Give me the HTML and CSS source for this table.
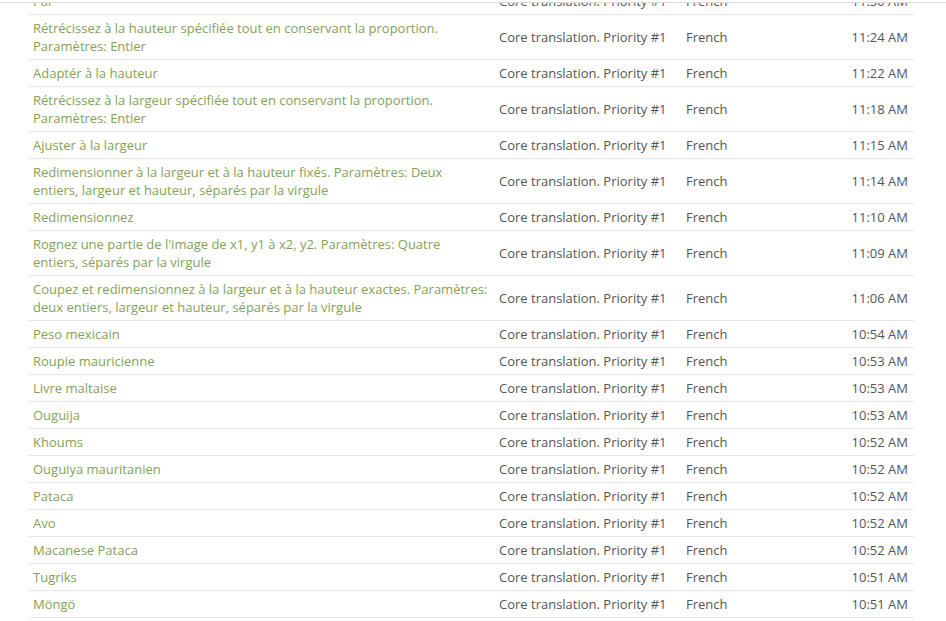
FILE: index.html
```html
<!DOCTYPE html>
<html>
<head>
<meta charset="utf-8">
<link rel="stylesheet" href="styles.css">
</head>
<body>
<div class="topbar"></div>
<table class="log">
<colgroup><col class="c-str"><col class="c-proj"><col class="c-lang"><col class="c-time"></colgroup>
<tbody>
<tr><td class="str">Par</td><td>Core translation. Priority #1</td><td>French</td><td class="time">11:30 AM</td></tr>
<tr><td class="str">Rétrécissez à la hauteur spécifiée tout en conservant la proportion. Paramètres: Entier</td><td>Core translation. Priority #1</td><td>French</td><td class="time">11:24 AM</td></tr>
<tr><td class="str">Adaptér à la hauteur</td><td>Core translation. Priority #1</td><td>French</td><td class="time">11:22 AM</td></tr>
<tr><td class="str">Rétrécissez à la largeur spécifiée tout en conservant la proportion. Paramètres: Entier</td><td>Core translation. Priority #1</td><td>French</td><td class="time">11:18 AM</td></tr>
<tr><td class="str">Ajuster à la largeur</td><td>Core translation. Priority #1</td><td>French</td><td class="time">11:15 AM</td></tr>
<tr><td class="str">Redimensionner à la largeur et à la hauteur fixés. Paramètres: Deux entiers, largeur et hauteur, séparés par la virgule</td><td>Core translation. Priority #1</td><td>French</td><td class="time">11:14 AM</td></tr>
<tr><td class="str">Redimensionnez</td><td>Core translation. Priority #1</td><td>French</td><td class="time">11:10 AM</td></tr>
<tr><td class="str">Rognez une partie de l'image de x1, y1 à x2, y2. Paramètres: Quatre entiers, séparés par la virgule</td><td>Core translation. Priority #1</td><td>French</td><td class="time">11:09 AM</td></tr>
<tr><td class="str">Coupez et redimensionnez à la largeur et à la hauteur exactes. Paramètres: deux entiers, largeur et hauteur, séparés par la virgule</td><td>Core translation. Priority #1</td><td>French</td><td class="time">11:06 AM</td></tr>
<tr><td class="str">Peso mexicain</td><td>Core translation. Priority #1</td><td>French</td><td class="time">10:54 AM</td></tr>
<tr><td class="str">Roupie mauricienne</td><td>Core translation. Priority #1</td><td>French</td><td class="time">10:53 AM</td></tr>
<tr><td class="str">Livre maltaise</td><td>Core translation. Priority #1</td><td>French</td><td class="time">10:53 AM</td></tr>
<tr><td class="str">Ouguija</td><td>Core translation. Priority #1</td><td>French</td><td class="time">10:53 AM</td></tr>
<tr><td class="str">Khoums</td><td>Core translation. Priority #1</td><td>French</td><td class="time">10:52 AM</td></tr>
<tr><td class="str">Ouguiya mauritanien</td><td>Core translation. Priority #1</td><td>French</td><td class="time">10:52 AM</td></tr>
<tr><td class="str">Pataca</td><td>Core translation. Priority #1</td><td>French</td><td class="time">10:52 AM</td></tr>
<tr><td class="str">Avo</td><td>Core translation. Priority #1</td><td>French</td><td class="time">10:52 AM</td></tr>
<tr><td class="str">Macanese Pataca</td><td>Core translation. Priority #1</td><td>French</td><td class="time">10:52 AM</td></tr>
<tr><td class="str">Tugriks</td><td>Core translation. Priority #1</td><td>French</td><td class="time">10:51 AM</td></tr>
<tr><td class="str">Möngö</td><td>Core translation. Priority #1</td><td>French</td><td class="time">10:51 AM</td></tr>
</tbody>
</table>
</body>
</html>
```
FILE: styles.css
```css
html, body {
  margin: 0;
  padding: 0;
  background: #fff;
}
body {
  font-family: "Open Sans", "Liberation Sans", sans-serif;
  font-size: 13px;
  line-height: 18px;
  color: #555;
  overflow: hidden;
}
.topbar {
  position: fixed;
  top: 0;
  left: 0;
  right: 0;
  height: 2px;
  background: #fff;
  border-bottom: 1px solid #dcdcdc;
  z-index: 2;
}
.log {
  border-collapse: collapse;
  table-layout: fixed;
  width: 886px;
  margin: -12px 0 0 28px;
}
.c-str { width: 466px; }
.c-proj { width: 187px; }
.c-lang { width: 120px; }
.c-time { width: 113px; }
.log td {
  padding: 4px 5px 4px 5px;
  border-bottom: 1px solid #e6e6e6;
  vertical-align: middle;
}
.log td.str {
  color: #83a257;
}
.log td.time {
  text-align: right;
  padding-right: 6px;
}
```
